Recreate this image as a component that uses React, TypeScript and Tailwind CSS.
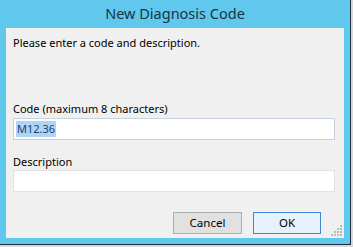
export default function App() {
  return (
    <div className="w-[353px] h-[247px] bg-[#d9d9d9] overflow-hidden font-['Noto_Sans','Open_Sans',sans-serif]">
      <div className="w-[351px] h-[245px] bg-[#5fc8ec] border-r border-b border-[#1c2d3c] flex flex-col px-[6px] pb-[6px]">
        <div className="h-[28px] flex items-center justify-center text-[14.5px] text-[#1b3345] shrink-0">
          New Diagnosis Code
        </div>
        <div className="flex-1 bg-[#f0f0f0] px-[7px] pt-[7px] relative text-[11px] leading-[16px] text-black">
          <div>Please enter a code and description.</div>
          <div className="mt-[50px]">Code (maximum 8 characters)</div>
          <div className="mt-[1px] h-[22px] w-[322px] bg-white border border-[#c5d2de] flex items-center px-[2px]">
            <span className="bg-[#aed5f5] text-[#1d3f73] px-[1px]">M12.36</span>
          </div>
          <div className="mt-[14px]">Description</div>
          <div className="mt-[0px] h-[22px] w-[322px] bg-white border border-[#e2e2e2]" />
          <div className="flex justify-end gap-[11px] mt-[20px] pr-[16px]">
            <button className="w-[69px] h-[22px] bg-[#e1e1e1] border border-[#adadad] text-[11.5px] text-black">
              Cancel
            </button>
            <button className="w-[68px] h-[22px] bg-[#e5f1fb] border border-[#3c8ad6] text-[11.5px] text-black">
              OK
            </button>
          </div>
          <svg className="absolute right-[2px] bottom-[2px]" width="11" height="11" viewBox="0 0 11 11">
            {[
              [9, 1], [9, 4], [6, 4], [9, 7], [6, 7], [3, 7], [9, 10], [6, 10], [3, 10], [0, 10],
            ].map(([x, y], i) => (
              <rect key={i} x={x} y={y - 1} width="2" height="2" fill="#b8b8b8" />
            ))}
          </svg>
        </div>
      </div>
    </div>
  );
}
